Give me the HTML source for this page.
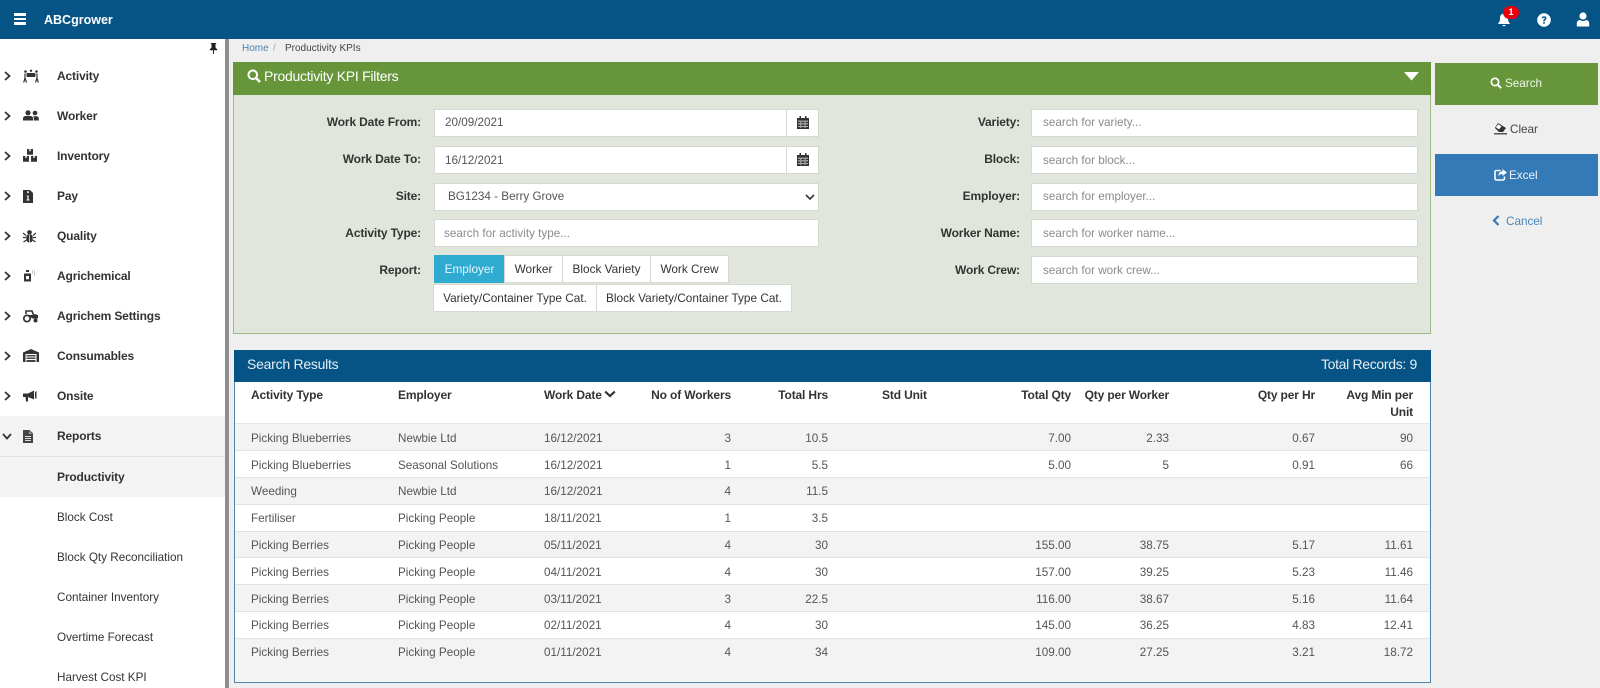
<!DOCTYPE html>
<html><head><meta charset="utf-8"><title>Productivity KPIs</title>
<style>
*{box-sizing:border-box}
html,body{margin:0;padding:0;width:1600px;height:688px;overflow:hidden;background:#efefef;font-family:"Liberation Sans",Arial,sans-serif;font-size:11.7px;color:#333}
body{filter:blur(.3px)}
.a{position:absolute;white-space:nowrap}
svg{position:absolute;display:block}
.m{left:57px;font-weight:bold;line-height:16px;letter-spacing:-.15px;font-size:12px;color:#333}
.s{left:57px;line-height:16px;color:#333}
.lbl{font-weight:bold;text-align:right;line-height:16px;color:#333;font-size:12px;letter-spacing:-.15px}
.inp{background:#fff;border:1px solid #d6d9d2;height:28px;line-height:26px;padding-left:10px;color:#555;font-size:11.7px}
.lo{line-height:28px}
.ph{color:#8b8b8b}
.rb{background:#fff;border:1px solid #d6d9d2;text-align:center;line-height:26px;color:#333;height:28px;font-size:11.8px}
.th{font-weight:bold;line-height:16px;color:#333;font-size:12px;letter-spacing:-.15px}
.td{line-height:16px;color:#555}
.r{text-align:right}
.row{position:absolute;left:235px;width:1194px;height:27px;border-bottom:1px solid #e2e2e2}
</style></head><body>

<!-- top bar -->
<div class="a" style="left:0;top:0;width:1600px;height:39px;background:#055485"></div>
<div class="a" style="left:14px;top:13px;width:12px;height:2.500px;background:#fff"></div>
<div class="a" style="left:14px;top:17.500px;width:12px;height:2.500px;background:#fff"></div>
<div class="a" style="left:14px;top:22px;width:12px;height:2.500px;background:#fff"></div>
<div class="a" style="left:44px;top:12px;font-weight:bold;font-size:12.5px;line-height:16px;color:#fff">ABCgrower</div>
<svg style="left:1497px;top:13px" width="14" height="14" viewBox="0 0 14 14"><path d="M7 0.5C4.5 .5 3 2.5 3 5C3 8.5 2 9.5 .8 11H13.2C12 9.5 11 8.5 11 5C11 2.500 9.500 .5 7 .5ZM5.200 12A1.900 1.900 0 0 0 8.800 12Z" fill="#fff"/></svg>
<div class="a" style="left:1503px;top:6px;width:16px;height:13px;border-radius:7px;background:#e8000f;color:#fff;font-size:9px;font-weight:bold;text-align:center;line-height:13px">1</div>
<svg style="left:1537px;top:13px" width="14" height="14" viewBox="0 0 14 14"><circle cx="7" cy="7" r="6.800" fill="#fff"/><path d="M4.700 5.300C4.800 3.900 5.800 3.200 7.100 3.200C8.500 3.200 9.500 4 9.500 5.200C9.500 6.700 7.800 6.800 7.800 8.200H6.200C6.200 6.200 7.800 6.100 7.800 5.300C7.800 4.900 7.500 4.600 7 4.600C6.500 4.600 6.200 4.900 6.100 5.500Z" fill="#055485"/><rect x="6.200" y="9" width="1.600" height="1.700" fill="#055485"/></svg>
<svg style="left:1576px;top:12px" width="14" height="15" viewBox="0 0 14 15"><circle cx="7" cy="4" r="3.600" fill="#fff"/><path d="M.8 14.500V11.500C.8 9.300 2.500 8 4 8C5 8.700 6 9 7 9C8 9 9 8.700 10 8C11.500 8 13.200 9.300 13.200 11.500V14.500Z" fill="#fff"/></svg>

<!-- sidebar -->
<div class="a" style="left:0;top:39px;width:225px;height:649px;background:#fff"></div>
<div class="a" style="left:225px;top:39px;width:4px;height:649px;background:#8f8f8f"></div>
<svg style="left:209px;top:43px" width="9" height="11" viewBox="0 0 9 11"><path d="M1.800 0H7.200V1H6.500V4.500L8.300 6.500V7.300H5V11H4V7.300H.7V6.500L2.500 4.500V1H1.800Z" fill="#222"/></svg>

<div class="a" style="left:0;top:416px;width:225px;height:40px;background:#f3f3f3"></div>
<div class="a" style="left:0;top:456px;width:225px;height:1px;background:#e2e2e2"></div>
<div class="a" style="left:0;top:457px;width:225px;height:40px;background:#f3f3f3"></div>

<svg style="left:4px;top:71px" width="7" height="10" viewBox="0 0 7 10"><path d="M1 1L5.500 5L1 9" fill="none" stroke="#333" stroke-width="1.800"/></svg>
<svg style="left:4px;top:111px" width="7" height="10" viewBox="0 0 7 10"><path d="M1 1L5.500 5L1 9" fill="none" stroke="#333" stroke-width="1.800"/></svg>
<svg style="left:4px;top:151px" width="7" height="10" viewBox="0 0 7 10"><path d="M1 1L5.500 5L1 9" fill="none" stroke="#333" stroke-width="1.800"/></svg>
<svg style="left:4px;top:191px" width="7" height="10" viewBox="0 0 7 10"><path d="M1 1L5.500 5L1 9" fill="none" stroke="#333" stroke-width="1.800"/></svg>
<svg style="left:4px;top:231px" width="7" height="10" viewBox="0 0 7 10"><path d="M1 1L5.500 5L1 9" fill="none" stroke="#333" stroke-width="1.800"/></svg>
<svg style="left:4px;top:271px" width="7" height="10" viewBox="0 0 7 10"><path d="M1 1L5.500 5L1 9" fill="none" stroke="#333" stroke-width="1.800"/></svg>
<svg style="left:4px;top:311px" width="7" height="10" viewBox="0 0 7 10"><path d="M1 1L5.500 5L1 9" fill="none" stroke="#333" stroke-width="1.800"/></svg>
<svg style="left:4px;top:351px" width="7" height="10" viewBox="0 0 7 10"><path d="M1 1L5.500 5L1 9" fill="none" stroke="#333" stroke-width="1.800"/></svg>
<svg style="left:4px;top:391px" width="7" height="10" viewBox="0 0 7 10"><path d="M1 1L5.500 5L1 9" fill="none" stroke="#333" stroke-width="1.800"/></svg>
<svg style="left:2px;top:433px" width="10" height="7" viewBox="0 0 10 7"><path d="M1 1L5 5.500L9 1" fill="none" stroke="#333" stroke-width="1.800"/></svg>

<!-- sidebar icons -->
<svg style="left:23px;top:69px" width="16" height="14" viewBox="0 0 16 14" fill="#333"><circle cx="2.500" cy="2.500" r="1.300"/><circle cx="13.500" cy="2.500" r="1.300"/><circle cx="8" cy="1.800" r="1.200"/><rect x="3.500" y="4" width="9" height="4" rx="1"/><path d="M2 4.500V9L.7 13.500M2 9L3.500 13.500M14 4.500V9L15.300 13.500M14 9L12.500 13.500" stroke="#333" stroke-width="1.200" fill="none"/></svg>
<svg style="left:23px;top:110px" width="16" height="11" viewBox="0 0 16 11" fill="#333"><circle cx="5" cy="2.800" r="2.600"/><circle cx="12" cy="3" r="2.300"/><path d="M0 10.500V8.500C0 6.800 1.500 6 2.700 6H7.300C8.500 6 10 6.800 10 8.500V10.500Z"/><path d="M10.800 10.500V8.300C10.800 7.500 10.500 6.800 10 6.200H13.300C14.700 6.200 15.800 7 15.800 8.500V10.500Z"/></svg>
<svg style="left:23px;top:149px" width="14" height="13" viewBox="0 0 14 13" fill="#333"><path d="M4 0H6.300V2.200H7.700V0H10V5.800H4Z"/><path d="M0 7H2.300V9H3.700V7H6V12.800H0Z"/><path d="M8 7H10.300V9H11.700V7H14V12.800H8Z"/></svg>
<svg style="left:23px;top:190px" width="10" height="13" viewBox="0 0 10 13"><path d="M0 0H7L10 3V13H0Z" fill="#333"/><rect x="4.200" y="1.200" width="1.600" height="1.800" fill="#fff"/><path d="M3.500 10.500H6.500V9.500H5.600V5.500H4L3.500 6.400H4.400V9.500H3.500Z" fill="#fff"/></svg>
<svg style="left:23px;top:230px" width="13" height="13" viewBox="0 0 13 13" fill="#333"><ellipse cx="6.500" cy="2.200" rx="2.400" ry="2"/><rect x="3.300" y="4" width="6.400" height="8.500" rx="3"/><path d="M0 3L3 5.500M13 3L10 5.500M0 7.500H3M13 7.500H10M.5 12L3.500 10M12.500 12L9.500 10" stroke="#333" stroke-width="1.200" fill="none"/><rect x="6.200" y="4.500" width=".7" height="8" fill="#fff"/></svg>
<svg style="left:23px;top:270px" width="13" height="12" viewBox="0 0 13 12"><path d="M3 0H6V2H3ZM1 3.500H8V11.500H1Z" fill="#333"/><rect x="3" y="6" width="3" height="3.300" fill="#fff"/><path d="M9 .5h1v1H9zM11 .5h1v1h-1zM9 2.500h1v1H9zM11 2.500h1v1h-1zM11 4.500h1v1h-1z" fill="#999"/></svg>
<svg style="left:23px;top:310px" width="15" height="13" viewBox="0 0 15 13"><path d="M3 4V1H9L10.500 5H13.500" fill="none" stroke="#333" stroke-width="1.600"/><path d="M4 5H15V8.500H9.500Z" fill="#333"/><circle cx="4" cy="8.500" r="3.200" fill="#fff" stroke="#333" stroke-width="1.700"/><circle cx="12.500" cy="10.500" r="2" fill="#333"/></svg>
<svg style="left:23px;top:349px" width="16" height="13" viewBox="0 0 16 13"><path d="M0 13V3.500L8 0L16 3.500V13H13.500V5H2.500V13Z" fill="#333"/><path d="M3.500 6H12.500V7.500H3.500ZM3.500 8.500H12.500V10H3.500ZM3.500 11H12.500V13H3.500Z" fill="#444"/></svg>
<svg style="left:23px;top:390px" width="14" height="12" viewBox="0 0 14 12"><path d="M0 3.500H5L11 .5V9.500L5 7V11.500H3L2.500 7H0Z" fill="#333"/><path d="M12 2L13.500 1V9L12 8Z" fill="#333"/></svg>
<svg style="left:23px;top:430px" width="10" height="13" viewBox="0 0 10 13"><path d="M0 0H6.500L10 3.500V13H0Z" fill="#444"/><path d="M6 .8V4H9.200" fill="#999"/><path d="M2 6H8V7H2ZM2 8H8V9H2ZM2 10H8V11H2Z" fill="#ddd"/></svg>

<div class="a m" style="top:68px">Activity</div>
<div class="a m" style="top:108px">Worker</div>
<div class="a m" style="top:148px">Inventory</div>
<div class="a m" style="top:188px">Pay</div>
<div class="a m" style="top:228px">Quality</div>
<div class="a m" style="top:268px">Agrichemical</div>
<div class="a m" style="top:308px">Agrichem Settings</div>
<div class="a m" style="top:348px">Consumables</div>
<div class="a m" style="top:388px">Onsite</div>
<div class="a m" style="top:428px">Reports</div>
<div class="a m" style="top:469px">Productivity</div>
<div class="a s" style="top:510px">Block Cost</div>
<div class="a s" style="top:550px">Block Qty Reconciliation</div>
<div class="a s" style="top:590px">Container Inventory</div>
<div class="a s" style="top:630px">Overtime Forecast</div>
<div class="a s" style="top:670px">Harvest Cost KPI</div>

<!-- breadcrumb -->
<div class="a" style="left:242px;top:42px;font-size:10px;line-height:14px;color:#4f7fae">Home</div>
<div class="a" style="left:273px;top:42px;font-size:10px;line-height:14px;color:#aaa">/</div>
<div class="a" style="left:285px;top:42px;font-size:10px;line-height:14px;color:#444">Productivity KPIs</div>

<!-- filter panel -->
<div class="a" style="left:233px;top:62px;width:1198px;height:272px;background:#e1e6dc;border:1px solid #9db985"></div>
<div class="a" style="left:233px;top:62px;width:1198px;height:33px;background:#669639"></div>
<svg style="left:247px;top:69px" width="14" height="14" viewBox="0 0 14 14"><circle cx="5.800" cy="5.800" r="4.300" fill="none" stroke="#fff" stroke-width="2"/><path d="M9 9L13 13" stroke="#fff" stroke-width="2.400"/></svg>
<div class="a" style="left:264px;top:68px;font-size:14px;line-height:16px;color:#fff;letter-spacing:-.27px">Productivity KPI Filters</div>
<svg style="left:1404px;top:72px" width="15" height="9" viewBox="0 0 15 9"><path d="M0 0H15L7.500 8.500Z" fill="#fff"/></svg>

<!-- left form -->
<div class="a lbl" style="left:250px;width:171px;top:114px">Work Date From:</div>
<div class="a lbl" style="left:250px;width:171px;top:151px">Work Date To:</div>
<div class="a lbl" style="left:250px;width:171px;top:188px">Site:</div>
<div class="a lbl" style="left:250px;width:171px;top:225px">Activity Type:</div>
<div class="a lbl" style="left:250px;width:171px;top:262px">Report:</div>

<div class="a inp" style="left:434px;top:109px;width:353px">20/09/2021</div>
<div class="a inp" style="left:786px;top:109px;width:33px"></div>
<div class="a inp lo" style="left:434px;top:146px;width:353px">16/12/2021</div>
<div class="a inp" style="left:786px;top:146px;width:33px"></div>
<svg style="left:797px;top:116px" width="12" height="13" viewBox="0 0 12 13"><path d="M0 2H12V13H0Z" fill="#333"/><rect x="2.500" y="0" width="1.500" height="3" fill="#333"/><rect x="8" y="0" width="1.500" height="3" fill="#333"/><path d="M1 4.800H11V5.500H1ZM1 7.500H11V8.200H1ZM1 10.200H11V10.900H1ZM3.500 5V12H4.200V5ZM7.700 5V12H8.400V5Z" fill="#fff"/></svg>
<svg style="left:797px;top:153px" width="12" height="13" viewBox="0 0 12 13"><path d="M0 2H12V13H0Z" fill="#333"/><rect x="2.500" y="0" width="1.500" height="3" fill="#333"/><rect x="8" y="0" width="1.500" height="3" fill="#333"/><path d="M1 4.800H11V5.500H1ZM1 7.500H11V8.200H1ZM1 10.200H11V10.900H1ZM3.500 5V12H4.200V5ZM7.700 5V12H8.400V5Z" fill="#fff"/></svg>
<div class="a inp" style="left:434px;top:183px;width:385px;padding-left:13px">BG1234 - Berry Grove</div>
<svg style="left:805px;top:194px" width="10" height="7" viewBox="0 0 10 7"><path d="M1 1L5 5L9 1" fill="none" stroke="#333" stroke-width="1.600"/></svg>
<div class="a inp ph lo" style="left:434px;top:219px;width:385px;padding-left:9px">search for activity type...</div>

<div class="a rb lo" style="left:434px;top:255px;width:71px;background:#2faad0;border-color:#2faad0;color:#e8f6fa">Employer</div>
<div class="a rb lo" style="left:504px;top:255px;width:59px">Worker</div>
<div class="a rb lo" style="left:562px;top:255px;width:89px">Block Variety</div>
<div class="a rb lo" style="left:650px;top:255px;width:79px">Work Crew</div>
<div class="a rb" style="left:433px;top:284px;width:164px">Variety/Container Type Cat.</div>
<div class="a rb" style="left:596px;top:284px;width:196px">Block Variety/Container Type Cat.</div>

<!-- right form -->
<div class="a lbl" style="left:850px;width:170px;top:114px">Variety:</div>
<div class="a lbl" style="left:850px;width:170px;top:151px">Block:</div>
<div class="a lbl" style="left:850px;width:170px;top:188px">Employer:</div>
<div class="a lbl" style="left:850px;width:170px;top:225px">Worker Name:</div>
<div class="a lbl" style="left:850px;width:170px;top:262px">Work Crew:</div>
<div class="a inp ph" style="left:1031px;top:109px;width:387px;padding-left:11px">search for variety...</div>
<div class="a inp ph lo" style="left:1031px;top:146px;width:387px;padding-left:11px">search for block...</div>
<div class="a inp ph" style="left:1031px;top:183px;width:387px;padding-left:11px">search for employer...</div>
<div class="a inp ph lo" style="left:1031px;top:219px;width:387px;padding-left:11px">search for worker name...</div>
<div class="a inp ph lo" style="left:1031px;top:256px;width:387px;padding-left:11px">search for work crew...</div>

<!-- right buttons -->
<div class="a" style="left:1435px;top:63px;width:163px;height:42px;background:#669639"></div>
<svg style="left:1490px;top:77px" width="12" height="12" viewBox="0 0 14 14"><circle cx="5.800" cy="5.800" r="4.300" fill="none" stroke="#fff" stroke-width="2"/><path d="M9 9L13 13" stroke="#fff" stroke-width="2.400"/></svg>
<div class="a" style="left:1505px;top:76px;line-height:16px;color:#f1f5ec">Search</div>
<svg style="left:1494px;top:123px" width="13" height="12" viewBox="0 0 13 12"><path d="M4 0L12 5L9 9H5L1 5Z" fill="#333"/><path d="M4 .8L8 3.500L5 6.800L1.500 4.500Z" fill="#fff" stroke="#333" stroke-width=".6"/><rect x="0" y="10" width="13" height="1.500" fill="#555"/></svg>
<div class="a" style="left:1510px;top:122px;line-height:16px;color:#444">Clear</div>
<div class="a" style="left:1435px;top:154px;width:163px;height:42px;background:#337ab7"></div>
<svg style="left:1494px;top:169px" width="13" height="12" viewBox="0 0 13 12"><path d="M6.500 1.500H2.500A1.500 1.500 0 0 0 1 3V9.500A1.500 1.500 0 0 0 2.500 11H9A1.500 1.500 0 0 0 10.500 9.500V7.500" fill="none" stroke="#fff" stroke-width="1.600"/><path d="M8.500 0L13 3.500L8.500 7V5C6 5 4.800 6 4.500 8C4 4.500 5.800 2.200 8.500 2.200Z" fill="#fff"/></svg>
<div class="a" style="left:1509px;top:168px;line-height:16px;color:#eef4fa">Excel</div>
<svg style="left:1492px;top:215px" width="8" height="11" viewBox="0 0 8 11"><path d="M6.500 1L2 5.500L6.500 10" fill="none" stroke="#337ab7" stroke-width="2.200"/></svg>
<div class="a" style="left:1506px;top:214px;line-height:16px;color:#4a88bd">Cancel</div>

<!-- results -->
<div class="a" style="left:234px;top:350px;width:1197px;height:333px;background:#f3f3f3;border:1px solid #4f86ad"></div>
<div class="a" style="left:234px;top:350px;width:1197px;height:32px;background:#055485"></div>
<div class="a" style="left:247px;top:356px;font-size:14px;line-height:16px;color:#e6eef4;letter-spacing:-.25px">Search Results</div>
<div class="a r" style="left:1200px;width:217px;top:356px;font-size:14px;line-height:16px;color:#e6eef4;letter-spacing:-.32px">Total Records: 9</div>
<div class="a" style="left:235px;top:382px;width:1195px;height:42px;background:#fff;border-bottom:1px solid #e6e6e6"></div>

<div class="a th" style="left:251px;top:387px">Activity Type</div>
<div class="a th" style="left:398px;top:387px">Employer</div>
<div class="a th" style="left:544px;top:387px">Work Date</div>
<svg style="left:604px;top:390px" width="12" height="8" viewBox="0 0 12 8"><path d="M1.200 1.500L6 6L10.800 1.500" fill="none" stroke="#333" stroke-width="2.200"/></svg>
<div class="a th r" style="left:600px;width:131px;top:387px">No of Workers</div>
<div class="a th r" style="left:740px;width:88px;top:387px">Total Hrs</div>
<div class="a th" style="left:882px;top:387px">Std Unit</div>
<div class="a th r" style="left:971px;width:100px;top:387px">Total Qty</div>
<div class="a th r" style="left:1069px;width:100px;top:387px">Qty per Worker</div>
<div class="a th r" style="left:1215px;width:100px;top:387px">Qty per Hr</div>
<div class="a th r" style="left:1313px;width:100px;top:387px">Avg Min per</div>
<div class="a th r" style="left:1313px;width:100px;top:404px">Unit</div>

<div class="row" style="top:424px;background:#f3f3f3"></div>
<div class="row" style="top:451px;background:#fff;height:27px"></div>
<div class="row" style="top:478px;background:#f3f3f3;height:27px"></div>
<div class="row" style="top:505px;background:#fff;height:27px"></div>
<div class="row" style="top:532px;background:#f3f3f3;height:26px"></div>
<div class="row" style="top:558px;background:#fff;height:27px"></div>
<div class="row" style="top:585px;background:#f3f3f3;height:27px"></div>
<div class="row" style="top:612px;background:#fff;height:27px"></div>

<!-- rows -->
<div class="a td" style="left:251px;top:431px">Picking Blueberries</div><div class="a td" style="left:398px;top:431px">Newbie Ltd</div><div class="a td" style="left:544px;top:431px">16/12/2021</div><div class="a td r" style="left:631px;width:100px;top:431px">3</div><div class="a td r" style="left:728px;width:100px;top:431px">10.5</div><div class="a td r" style="left:971px;width:100px;top:431px">7.00</div><div class="a td r" style="left:1069px;width:100px;top:431px">2.33</div><div class="a td r" style="left:1215px;width:100px;top:431px">0.67</div><div class="a td r" style="left:1313px;width:100px;top:431px">90</div>

<div class="a td" style="left:251px;top:458px">Picking Blueberries</div><div class="a td" style="left:398px;top:458px">Seasonal Solutions</div><div class="a td" style="left:544px;top:458px">16/12/2021</div><div class="a td r" style="left:631px;width:100px;top:458px">1</div><div class="a td r" style="left:728px;width:100px;top:458px">5.5</div><div class="a td r" style="left:971px;width:100px;top:458px">5.00</div><div class="a td r" style="left:1069px;width:100px;top:458px">5</div><div class="a td r" style="left:1215px;width:100px;top:458px">0.91</div><div class="a td r" style="left:1313px;width:100px;top:458px">66</div>

<div class="a td" style="left:251px;top:484px">Weeding</div><div class="a td" style="left:398px;top:484px">Newbie Ltd</div><div class="a td" style="left:544px;top:484px">16/12/2021</div><div class="a td r" style="left:631px;width:100px;top:484px">4</div><div class="a td r" style="left:728px;width:100px;top:484px">11.5</div>

<div class="a td" style="left:251px;top:511px">Fertiliser</div><div class="a td" style="left:398px;top:511px">Picking People</div><div class="a td" style="left:544px;top:511px">18/11/2021</div><div class="a td r" style="left:631px;width:100px;top:511px">1</div><div class="a td r" style="left:728px;width:100px;top:511px">3.5</div>

<div class="a td" style="left:251px;top:538px">Picking Berries</div><div class="a td" style="left:398px;top:538px">Picking People</div><div class="a td" style="left:544px;top:538px">05/11/2021</div><div class="a td r" style="left:631px;width:100px;top:538px">4</div><div class="a td r" style="left:728px;width:100px;top:538px">30</div><div class="a td r" style="left:971px;width:100px;top:538px">155.00</div><div class="a td r" style="left:1069px;width:100px;top:538px">38.75</div><div class="a td r" style="left:1215px;width:100px;top:538px">5.17</div><div class="a td r" style="left:1313px;width:100px;top:538px">11.61</div>

<div class="a td" style="left:251px;top:565px">Picking Berries</div><div class="a td" style="left:398px;top:565px">Picking People</div><div class="a td" style="left:544px;top:565px">04/11/2021</div><div class="a td r" style="left:631px;width:100px;top:565px">4</div><div class="a td r" style="left:728px;width:100px;top:565px">30</div><div class="a td r" style="left:971px;width:100px;top:565px">157.00</div><div class="a td r" style="left:1069px;width:100px;top:565px">39.25</div><div class="a td r" style="left:1215px;width:100px;top:565px">5.23</div><div class="a td r" style="left:1313px;width:100px;top:565px">11.46</div>

<div class="a td" style="left:251px;top:592px">Picking Berries</div><div class="a td" style="left:398px;top:592px">Picking People</div><div class="a td" style="left:544px;top:592px">03/11/2021</div><div class="a td r" style="left:631px;width:100px;top:592px">3</div><div class="a td r" style="left:728px;width:100px;top:592px">22.5</div><div class="a td r" style="left:971px;width:100px;top:592px">116.00</div><div class="a td r" style="left:1069px;width:100px;top:592px">38.67</div><div class="a td r" style="left:1215px;width:100px;top:592px">5.16</div><div class="a td r" style="left:1313px;width:100px;top:592px">11.64</div>

<div class="a td" style="left:251px;top:618px">Picking Berries</div><div class="a td" style="left:398px;top:618px">Picking People</div><div class="a td" style="left:544px;top:618px">02/11/2021</div><div class="a td r" style="left:631px;width:100px;top:618px">4</div><div class="a td r" style="left:728px;width:100px;top:618px">30</div><div class="a td r" style="left:971px;width:100px;top:618px">145.00</div><div class="a td r" style="left:1069px;width:100px;top:618px">36.25</div><div class="a td r" style="left:1215px;width:100px;top:618px">4.83</div><div class="a td r" style="left:1313px;width:100px;top:618px">12.41</div>

<div class="a td" style="left:251px;top:645px">Picking Berries</div><div class="a td" style="left:398px;top:645px">Picking People</div><div class="a td" style="left:544px;top:645px">01/11/2021</div><div class="a td r" style="left:631px;width:100px;top:645px">4</div><div class="a td r" style="left:728px;width:100px;top:645px">34</div><div class="a td r" style="left:971px;width:100px;top:645px">109.00</div><div class="a td r" style="left:1069px;width:100px;top:645px">27.25</div><div class="a td r" style="left:1215px;width:100px;top:645px">3.21</div><div class="a td r" style="left:1313px;width:100px;top:645px">18.72</div>

</body></html>
